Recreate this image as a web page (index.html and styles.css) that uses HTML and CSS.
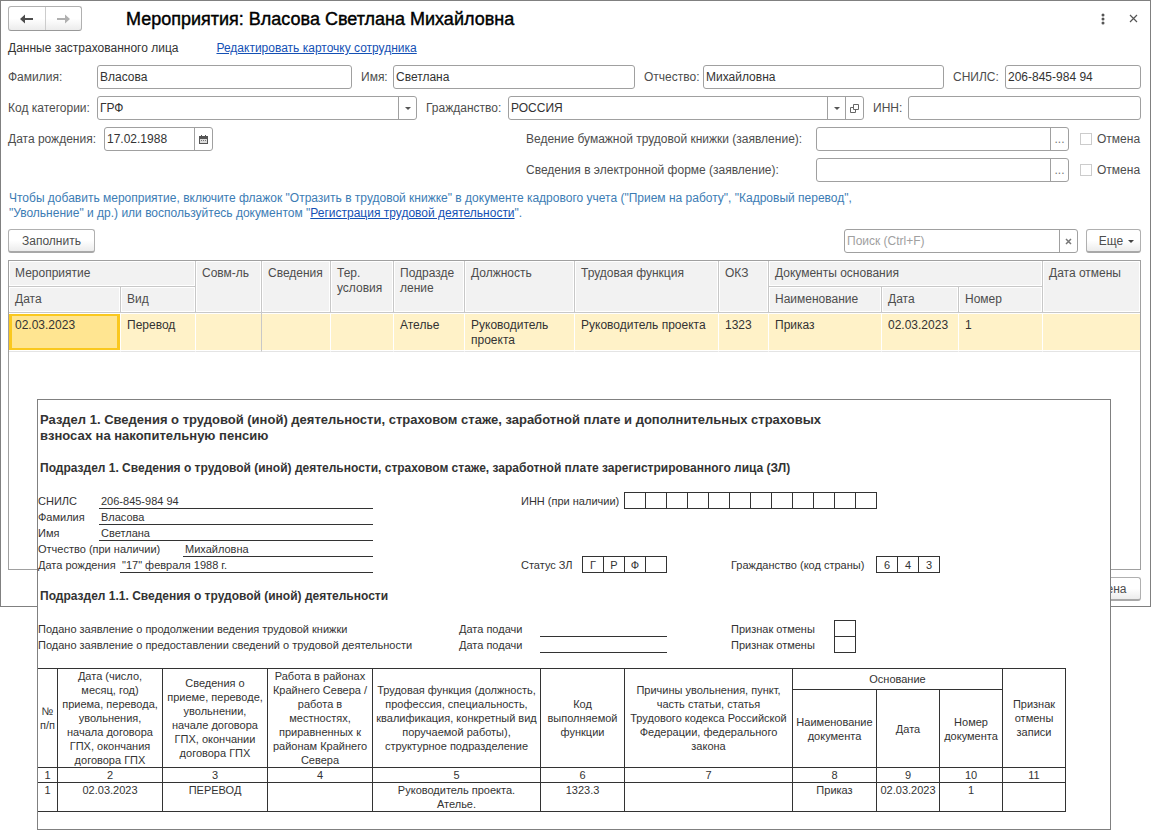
FILE: index.html
```html
<!DOCTYPE html>
<html lang="ru">
<head>
<meta charset="utf-8">
<title>Мероприятия: Власова Светлана Михайловна</title>
<link rel="stylesheet" href="styles.css">
</head>
<body>
<main class="window">
  <header class="titlebar">
    <div class="nav">
      <button class="nav-btn" type="button" aria-label="Назад"><svg width="16" height="12" viewBox="0 0 16 12"><path d="M1 6l5-4.500V5h8v2H6v3.500z" fill="#4d4d4d"/></svg></button>
      <button class="nav-btn" type="button" aria-label="Вперед"><svg width="16" height="12" viewBox="0 0 16 12"><path d="M15 6l-5-4.500V5H2v2h8v3.500z" fill="#b0b0b0"/></svg></button>
    </div>
    <h1 class="title">Мероприятия: Власова Светлана Михайловна</h1>
    <button class="icon-btn" type="button" aria-label="Меню"><svg width="4" height="12" viewBox="0 0 4 12"><g fill="#555"><circle cx="2" cy="2" r="1.5"/><circle cx="2" cy="6" r="1.5"/><circle cx="2" cy="10" r="1.5"/></g></svg></button>
    <button class="icon-btn" type="button" aria-label="Закрыть"><svg width="9" height="9" viewBox="0 0 9 9"><path d="M1 1l7 7M8 1L1 8" stroke="#555" stroke-width="1.2" fill="none"/></svg></button>
  </header>

  <div class="intro">
    <span>Данные застрахованного лица</span>
    <a class="link" href="#">Редактировать карточку сотрудника</a>
  </div>

  <form class="form">
    <div class="row row-name">
      <div class="field"><label class="lbl lbl-main" for="surname">Фамилия:</label><div class="box"><input id="surname" value="Власова"></div></div>
      <div class="field"><label class="lbl lbl-name" for="name">Имя:</label><div class="box"><input id="name" value="Светлана"></div></div>
      <div class="field"><label class="lbl lbl-patr" for="patr">Отчество:</label><div class="box"><input id="patr" value="Михайловна"></div></div>
      <div class="field"><label class="lbl lbl-snils" for="snils">СНИЛС:</label><div class="box"><input id="snils" value="206-845-984 94"></div></div>
    </div>
    <div class="row row-code">
      <div class="field"><label class="lbl lbl-main" for="cat">Код категории:</label>
        <div class="box"><select id="cat"><option>ГРФ</option></select><span class="addon"><svg width="6" height="3" viewBox="0 0 6 3"><path d="M0 0h6L3 3z" fill="#555"/></svg></span></div></div>
      <div class="field"><label class="lbl lbl-country" for="country">Гражданство:</label>
        <div class="box"><select id="country"><option>РОССИЯ</option></select><span class="addon"><svg width="6" height="3" viewBox="0 0 6 3"><path d="M0 0h6L3 3z" fill="#555"/></svg></span><button class="addon" type="button" aria-label="Открыть"><svg width="9" height="9" viewBox="0 0 9 9"><path d="M3.500.5h5v5h-5zM3 3.500H.5v5h5V6" fill="none" stroke="#666"/></svg></button></div></div>
      <div class="field"><label class="lbl lbl-inn" for="inn">ИНН:</label><div class="box"><input id="inn"></div></div>
    </div>
    <div class="row row-date">
      <div class="field"><label class="lbl lbl-birth" for="birth">Дата рождения:</label>
        <div class="box box-date"><input id="birth" value="17.02.1988"><button class="addon" type="button" aria-label="Календарь"><svg width="9" height="9" viewBox="0 0 9 9"><path d="M0 1h9v8H0z" fill="#555"/><path d="M2 0h1v2H2zM6 0h1v2H6z" fill="#555"/><path d="M1 4h7v4H1z" fill="#ddd"/><path d="M2 5h1v1H2zM4 5h1v1H4zM6 5h1v1H6z" fill="#777"/></svg></button></div></div>
      <div class="field"><label class="lbl lbl-doc" for="paper">Ведение бумажной трудовой книжки (заявление):</label><div class="box"><input id="paper"><button class="addon dots" type="button">...</button></div></div>
      <label class="check"><input type="checkbox">Отмена</label>
    </div>
    <div class="row row-date">
      <div class="field"></div>
      <div class="field"><label class="lbl lbl-doc" for="electro">Сведения в электронной форме (заявление):</label><div class="box"><input id="electro"><button class="addon dots" type="button">...</button></div></div>
      <label class="check"><input type="checkbox">Отмена</label>
    </div>
  </form>

  <p class="hint">Чтобы добавить мероприятие, включите флажок "Отразить в трудовой книжке" в документе кадрового учета ("Прием на работу", "Кадровый перевод",<br>"Увольнение" и др.) или воспользуйтесь документом "<a class="link" href="#">Регистрация трудовой деятельности</a>".</p>

  <div class="toolbar">
    <button class="btn btn-fill" type="button">Заполнить</button>
    <div class="box box-search"><input aria-label="Поиск" placeholder="Поиск (Ctrl+F)"><button class="addon" type="button" aria-label="Очистить"><svg width="7" height="7" viewBox="0 0 7 7"><path d="M1 1l5 5M6 1L1 6" stroke="#777" stroke-width="1.500" fill="none"/></svg></button></div>
    <button class="btn btn-more" type="button">Еще <svg width="6" height="3" viewBox="0 0 6 3"><path d="M0 0h6L3 3z" fill="#444"/></svg></button>
  </div>

  <div class="panel">
    <table class="events">
      <colgroup><col class="w112"><col class="w75"><col class="w66"><col class="w69"><col class="w63"><col class="w71"><col class="w110"><col class="w144"><col class="w50"><col class="w113"><col class="w77"><col class="w84"><col class="w97"></colgroup>
      <thead>
        <tr><th colspan="2">Мероприятие</th><th rowspan="2">Совм-ль</th><th rowspan="2">Сведения</th><th rowspan="2">Тер. условия</th><th rowspan="2">Подразде<wbr>ление</th><th rowspan="2">Должность</th><th rowspan="2">Трудовая функция</th><th rowspan="2">ОКЗ</th><th colspan="3">Документы основания</th><th class="last" rowspan="2">Дата отмены</th></tr>
        <tr><th>Дата</th><th>Вид</th><th>Наименование</th><th>Дата</th><th>Номер</th></tr>
      </thead>
      <tbody>
        <tr><td class="current">02.03.2023</td><td>Перевод</td><td class="divider"></td><td></td><td></td><td>Ателье</td><td>Руководитель проекта</td><td>Руководитель проекта</td><td>1323</td><td>Приказ</td><td>02.03.2023</td><td>1</td><td class="last"></td></tr>
      </tbody>
    </table>
  </div>

  <footer class="footer"><button class="btn btn-cancel" type="button">Отмена</button></footer>
</main>

<article class="sheet">
  <h2 class="section">Раздел 1. Сведения о трудовой (иной) деятельности, страховом стаже, заработной плате и дополнительных страховых<br>взносах на накопительную пенсию</h2>
  <h3 class="subsection">Подраздел 1. Сведения о трудовой (иной) деятельности, страховом стаже, заработной плате зарегистрированного лица (ЗЛ)</h3>

  <div class="person">
    <div class="pair"><span class="key key-short">СНИЛС</span><span class="val">206-845-984 94</span></div>
    <div class="pair inn"><span class="key key-inn">ИНН (при наличии)</span><span class="cells"><i></i><i></i><i></i><i></i><i></i><i></i><i></i><i></i><i></i><i></i><i></i><i></i></span></div>
    <div class="pair"><span class="key key-short">Фамилия</span><span class="val">Власова</span></div>
    <div class="pair"><span class="key key-short">Имя</span><span class="val">Светлана</span></div>
    <div class="pair"><span class="key key-patr">Отчество (при наличии)</span><span class="val">Михайловна</span></div>
    <div class="pair"><span class="key key-birth">Дата рождения</span><span class="val">"17" февраля 1988 г.</span></div>
    <div class="pair status"><span class="key key-status">Статус ЗЛ</span><span class="cells"><i>Г</i><i>Р</i><i>Ф</i><i></i></span></div>
    <div class="pair country"><span class="key key-country">Гражданство (код страны)</span><span class="cells"><i>6</i><i>4</i><i>3</i></span></div>
  </div>

  <h3 class="subsection">Подраздел 1.1. Сведения о трудовой (иной) деятельности</h3>

  <div class="claims">
    <span>Подано заявление о продолжении ведения трудовой книжки</span><span>Дата подачи</span><span class="val"></span><span class="cancel">Признак отмены</span><span class="cells"><i></i></span>
    <span>Подано заявление о предоставлении сведений о трудовой деятельности</span><span>Дата подачи</span><span class="val"></span><span class="cancel">Признак отмены</span><span class="cells"><i></i></span>
  </div>

  <table class="print">
    <colgroup><col class="w20"><col class="w105"><col class="w105"><col class="w105"><col class="w168"><col class="w84"><col class="w168"><col class="w84"><col class="w63"><col class="w63"><col class="w63"></colgroup>
    <thead>
      <tr class="group"><th rowspan="2">№<br>п/п</th><th rowspan="2">Дата (число,<br>месяц, год)<br>приема, перевода,<br>увольнения,<br>начала договора<br>ГПХ, окончания<br>договора ГПХ</th><th rowspan="2">Сведения о<br>приеме, переводе,<br>увольнении,<br>начале договора<br>ГПХ, окончании<br>договора ГПХ</th><th rowspan="2">Работа в районах<br>Крайнего Севера /<br>работа в<br>местностях,<br>приравненных к<br>районам Крайнего<br>Севера</th><th rowspan="2">Трудовая функция (должность,<br>профессия, специальность,<br>квалификация, конкретный вид<br>поручаемой работы),<br>структурное подразделение</th><th rowspan="2">Код<br>выполняемой<br>функции</th><th rowspan="2">Причины увольнения, пункт,<br>часть статьи, статья<br>Трудового кодекса Российской<br>Федерации, федерального<br>закона</th><th colspan="3">Основание</th><th rowspan="2">Признак<br>отмены<br>записи</th></tr>
      <tr><th>Наименование<br>документа</th><th>Дата</th><th>Номер<br>документа</th></tr>
    </thead>
    <tbody>
      <tr><td>1</td><td>2</td><td>3</td><td>4</td><td>5</td><td>6</td><td>7</td><td>8</td><td>9</td><td>10</td><td>11</td></tr>
      <tr><td>1</td><td>02.03.2023</td><td>ПЕРЕВОД</td><td></td><td>Руководитель проекта.<br>Ателье.</td><td>1323.3</td><td></td><td>Приказ</td><td>02.03.2023</td><td>1</td><td></td></tr>
    </tbody>
  </table>
</article>
</body>
</html>
```
FILE: styles.css
```css
* { box-sizing: border-box; }

body {
  margin: 0;
  position: relative;
  min-height: 100vh;
  background: #fff;
  color: #333;
  font: 12px/15px "Liberation Sans", Arial, sans-serif;
}

button, input, select { font: inherit; color: inherit; margin: 0; }

.window { border: 1px solid #808080; padding: 5px 9px 5px 7px; }

/* Title bar */
.titlebar { display: flex; align-items: center; height: 25px; }
.nav { display: flex; width: 74px; height: 25px; margin-right: 44px; border: 1px solid #b0b0b0; border-bottom-color: #999; border-radius: 3px; background: linear-gradient(#fff 50%, #ececec); }
.nav-btn { flex: 1; display: flex; align-items: center; justify-content: center; padding: 0; border: 0; background: none; }
.nav-btn + .nav-btn { border-left: 1px solid #ccc; }
.title { flex: 1; margin: 0; color: #000; font-size: 18px; line-height: 24px; font-weight: normal; white-space: nowrap; -webkit-text-stroke: 0.4px #000; }
.icon-btn { display: flex; align-items: center; justify-content: center; width: 16px; height: 16px; margin-left: 14px; padding: 0; border: 0; background: none; }

.intro { display: flex; gap: 38px; margin-top: 10px; }
.link { color: #1450b4; text-decoration: underline; }

/* Form rows */
.form { display: grid; gap: 7px; margin-top: 9px; }
.row { display: grid; gap: 9px; }
.row-name { grid-template-columns: 344fr 274fr 300fr 188fr; }
.row-code { grid-template-columns: 409fr 438fr 268fr; }
.row-date { grid-template-columns: 1fr 543px 61px; gap: 11px; }
.field { display: flex; align-items: center; min-width: 0; }
.lbl { flex: none; color: #4d4d4d; white-space: nowrap; }
.lbl-main { width: 89px; }
.lbl-name { width: 32px; }
.lbl-patr { width: 59px; }
.lbl-snils { width: 52px; }
.lbl-country { width: 82px; }
.lbl-inn { width: 35px; }
.lbl-birth { width: 96px; }
.lbl-doc { width: 290px; }

.box { display: flex; flex: 1; min-width: 0; height: 24px; border: 1px solid #a0a0a0; border-radius: 3px; background: #fff; }
.box input, .box select { flex: 1; min-width: 0; width: 0; padding: 0 2px; border: 0; outline: 0; background: none; appearance: none; }
.box-date { flex: 0 0 109px; }
.addon { display: flex; flex: 0 0 18px; align-items: center; justify-content: center; padding: 0; border: 0; border-left: 1px solid #a0a0a0; background: none; }
.dots { color: #777; }

.check { display: flex; align-items: center; gap: 5px; color: #4d4d4d; }
.check input { appearance: none; width: 12px; height: 12px; margin: 0; border: 1px solid #ccc; background: #fff; }

.hint { margin: 9px 0 8px; padding-left: 1px; color: #3c7cb4; }

/* Buttons and search */
.toolbar { display: flex; gap: 8px; }
.btn { height: 24px; padding: 1px 12px 0; border: 1px solid #b0b0b0; border-bottom: 2px solid #a8a8a8; border-radius: 3px; background: linear-gradient(#fff 50%, #ececec); color: #4d4d4d; }
.btn-fill { width: 87px; margin-right: auto; }
.box-search { flex: 0 0 234px; }
.box-search input::placeholder { color: #a0a0a0; opacity: 1; }
.btn-more { display: flex; align-items: center; justify-content: center; gap: 5px; width: 55px; padding: 1px 0 0 6px; }
.btn-cancel { width: 72px; }
.footer { display: flex; justify-content: flex-end; margin-top: 7px; }

/* Events table */
.panel { min-height: 310px; margin-top: 7px; border: 1px solid #a0a0a0; }
.events { width: 100%; table-layout: fixed; border-collapse: separate; border-spacing: 0; }
.events th, .events td { padding: 5px 0 0 6px; vertical-align: top; text-align: left; font-weight: normal; }
.events th { height: 26px; border-right: 1px solid #c8c8c8; border-bottom: 1px solid #c8c8c8; background: #f2f2f2; box-shadow: inset 0 0 0 1px #fff; color: #4d4d4d; }
.events td { height: 39px; border-right: 1px solid #fff; border-bottom: 1px solid #e4e4e4; background: #fff2c8; box-shadow: inset 0 1px #fff, inset 0 -1px #fff; }
.events .last { border-right: 0; }
.events .divider { border-right-color: #c8c8c8; }
.events .current { background: #ffe591; box-shadow: inset 0 1px #fff, inset 0 -1px #fff, inset 0 0 0 3px #fac81e; }

.w20 { width: 20px; }
.w50 { width: 50px; }
.w63 { width: 63px; }
.w66 { width: 66px; }
.w69 { width: 69px; }
.w71 { width: 71px; }
.w75 { width: 75px; }
.w77 { width: 77px; }
.w84 { width: 84px; }
.w97 { width: 97px; }
.w105 { width: 105px; }
.w110 { width: 110px; }
.w112 { width: 112px; }
.w113 { width: 113px; }
.w144 { width: 144px; }
.w168 { width: 168px; }

/* Printed form lying over the window */
.sheet { position: absolute; top: 399px; left: 37px; right: 40px; padding: 12px 44px 17px 0; border: 1px solid #808080; background: #fff; font-size: 11px; }
.section, .subsection { margin: 0 0 16px; padding-left: 2px; line-height: 16px; white-space: nowrap; }
.section { font-size: 13px; }
.subsection { margin-bottom: 17px; font-size: 12px; }

.person { display: grid; grid-template-columns: 335fr 148fr 210fr 335fr; grid-auto-rows: 16px; margin-bottom: 15px; line-height: 17px; }
.pair { display: flex; grid-column: 1; height: 16px; white-space: nowrap; }
.pair.inn { grid-column: 3 / 5; }
.pair.status { grid-column: 3; }
.pair.country { grid-column: 4; }
.key { flex: none; }
.key-short { width: 61px; }
.key-inn { width: 103px; }
.key-patr { width: 145px; }
.key-birth { width: 82px; }
.key-status { width: 61px; }
.key-country { width: 145px; }
.val { flex: 1; padding-left: 2px; border-bottom: 1px solid #333; }
.cells { display: flex; margin-top: -1px; }
.cells i { width: 22px; height: 17px; margin-right: -1px; border: 1px solid #333; text-align: center; font-style: normal; line-height: 17px; }

.claims { display: grid; grid-template-columns: 421fr 81fr 127fr 64fr 103fr 232fr; grid-auto-rows: 16px; margin-bottom: 15px; line-height: 17px; white-space: nowrap; }
.claims .cancel { grid-column: 5; }

.print { width: 100%; table-layout: fixed; border-collapse: separate; border-spacing: 0; border-top: 1px solid #333; line-height: 14px; text-align: center; }
.print th, .print td { padding: 0; border-right: 1px solid #333; border-bottom: 1px solid #333; font-weight: normal; white-space: nowrap; }
.print .group { height: 21px; }
.print thead tr:last-child { height: 78px; }
.print td { vertical-align: top; }
```
